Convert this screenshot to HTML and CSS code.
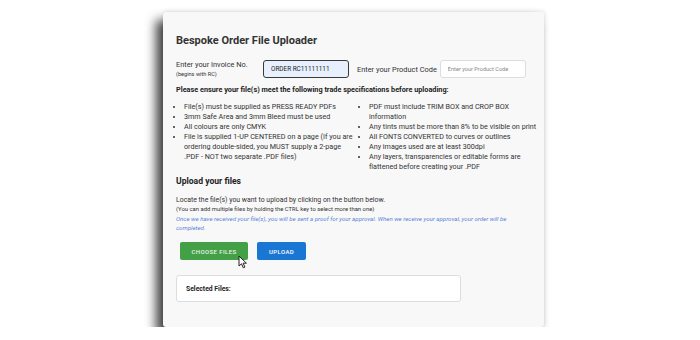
FILE: index.html
```html
<!DOCTYPE html>
<html lang="en">
<head>
    <meta charset="UTF-8">
    <title>Bespoke Order File Uploader</title>
    <link rel="stylesheet" href="styles.css">
</head>
<body>
    <div class="uploader">
        <h1>Bespoke Order File Uploader</h1>

        <div class="codes">
            <label class="code-label" for="invoice">
                Enter your Invoice No.
                <small>(begins with RC)</small>
            </label>
            <input type="text" id="invoice" class="invoice-input" value="ORDER RC11111111">
            <label class="code-label product-label" for="product">Enter your Product Code</label>
            <input type="text" id="product" class="product-input" placeholder="Enter your Product Code">
        </div>

        <h2 class="specs-title">Please ensure your file(s) meet the following trade specifications before uploading:</h2>
        <div class="specs">
            <ul>
                <li>File(s) must be supplied as PRESS READY PDFs</li>
                <li>3mm Safe Area and 3mm Bleed must be used</li>
                <li>All colours are only CMYK</li>
                <li>File is supplied 1-UP CENTERED on a page (If you are ordering double-sided, you MUST supply a 2-page .PDF - NOT two separate .PDF files)</li>
            </ul>
            <ul>
                <li>PDF must include TRIM BOX and CROP BOX information</li>
                <li>Any tints must be more than 8% to be visible on print</li>
                <li>All FONTS CONVERTED to curves or outlines</li>
                <li>Any images used are at least 300dpi</li>
                <li>Any layers, transparencies or editable forms are flattened before creating your .PDF</li>
            </ul>
        </div>

        <h2 class="upload-title">Upload your files</h2>
        <p class="locate">Locate the file(s) you want to upload by clicking on the button below.</p>
        <p class="hint">(You can add multiple files by holding the CTRL key to select more than one)</p>
        <p class="note">Once we have received your file(s), you will be sent a proof for your approval. When we receive your approval, your order will be completed.</p>

        <div class="actions">
            <button class="btn btn-choose">Choose Files
                <svg class="cursor" width="10" height="14" viewBox="0 0 10 14">
                    <path d="M1 1 L1 11 L3.5 8.8 L5.3 12.8 L6.9 12.1 L5.1 8.2 L8.4 8.2 Z" fill="#fff" stroke="#222" stroke-width="1" stroke-linejoin="round"/>
                </svg>
            </button>
            <button class="btn btn-upload">Upload</button>
        </div>

        <div class="selected">Selected Files:</div>
    </div>
</body>
</html>
```

FILE: styles.css
```css
body {
    margin: 0;
    background-color: #fff;
    font-family: Roboto, "Liberation Sans", Arial, sans-serif;
    color: #222;
}
.uploader {
    margin: 12px 0 0 163px;
    width: 381px;
    height: 315px;
    box-sizing: border-box;
    padding: 22px 5px 0 13px;
    background-color: #f8f8f8;
    border-radius: 3px;
    box-shadow: -7px 8px 11px rgba(0, 0, 0, 0.75), 1px -1px 4px rgba(0, 0, 0, 0.1);
}
h1 {
    margin: 0 0 12px 0;
    font-size: 11px;
    line-height: 13px;
    font-weight: 700;
    color: #333;
}
.codes {
    display: flex;
    align-items: center;
    height: 20px;
}
.code-label {
    font-size: 7.4px;
    color: #333;
    width: 87px;
    line-height: 11px;
}
.code-label small {
    display: block;
    font-size: 5.6px;
    line-height: 9px;
}
.product-label {
    width: auto;
    margin: 0 3px 0 8px;
}
.invoice-input,
.product-input {
    box-sizing: border-box;
    width: 86px;
    height: 18px;
    padding: 0 7px;
    font-family: inherit;
    font-size: 6.4px;
    border-radius: 3px;
    outline: none;
}
.invoice-input {
    background-color: #e8f0fe;
    border: 1.5px solid #3a3a3a;
    color: #222;
}
.product-input {
    background-color: #fff;
    border: 1px solid #ddd;
    font-size: 5.6px;
}
.product-input::placeholder {
    color: #888;
}
.specs-title {
    margin: 6px 0 7px 0;
    font-size: 7.3px;
    line-height: 10px;
    font-weight: 700;
    color: #222;
}
.specs {
    display: grid;
    grid-template-columns: 181px 1fr;
}
.specs ul {
    margin: 0;
    padding-left: 8px;
    font-size: 7.2px;
    line-height: 10px;
    color: #333;
}
.specs ul + ul {
    padding-left: 12px;
}
.upload-title {
    margin: 4px 0 8px 0;
    font-size: 8.6px;
    line-height: 11px;
    font-weight: 700;
    color: #222;
}
.locate {
    margin: 0;
    font-size: 6.9px;
    line-height: 10px;
    color: #333;
}
.hint {
    margin: 0;
    font-size: 5.9px;
    line-height: 9px;
    color: #333;
}
.note {
    margin: 0;
    max-width: 340px;
    font-size: 6.1px;
    line-height: 9px;
    font-style: italic;
    color: #5a84d6;
}
.actions {
    display: flex;
    gap: 9px;
    margin: 10px 0 0 4px;
}
.btn {
    position: relative;
    height: 18px;
    padding: 0;
    border: none;
    border-radius: 2px;
    color: #fff;
    font-family: inherit;
    font-size: 6px;
    font-weight: 500;
    letter-spacing: 0.4px;
    text-transform: uppercase;
}
.btn-choose {
    width: 68px;
    background-color: #43a047;
    color: #e6f3e6;
}
.btn-upload {
    width: 49px;
    background-color: #1976d2;
}
.cursor {
    position: absolute;
    left: 58px;
    top: 13px;
}
.selected {
    box-sizing: border-box;
    width: 285px;
    height: 27px;
    margin-top: 15px;
    padding: 0 9px;
    display: flex;
    align-items: center;
    background-color: #fff;
    border: 1px solid #ddd;
    border-radius: 3px;
    font-size: 6.8px;
    font-weight: 700;
    color: #222;
}
```
